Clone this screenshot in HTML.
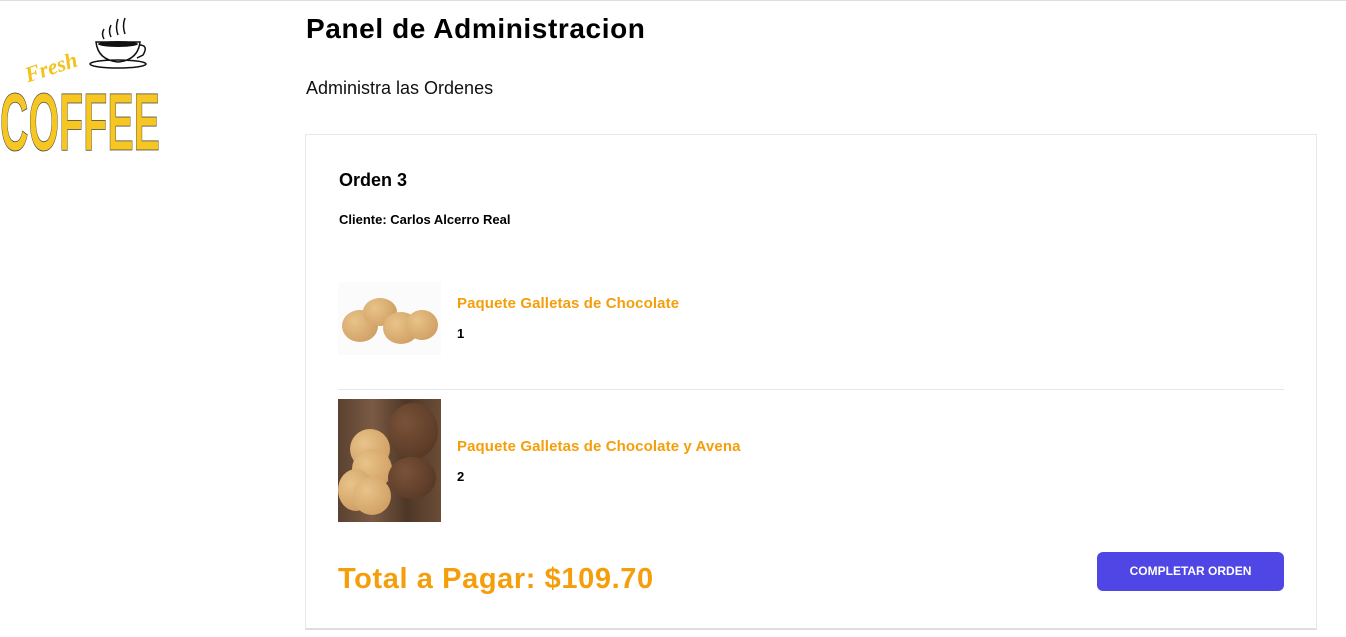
<!DOCTYPE html>
<html><head><meta charset="utf-8"><style>
*{margin:0;padding:0;box-sizing:border-box}
body{width:1346px;height:637px;overflow:hidden;background:#fff;font-family:"Liberation Sans",sans-serif;position:relative}
.a{position:absolute}
h1{position:absolute;left:306px;top:13px;font-size:28px;font-weight:bold;color:#000;letter-spacing:0.6px}
.sub{left:306px;top:78px;font-size:18px;color:#111}
.card{left:305px;top:134px;width:1012px;height:496px;border:1px solid #e5e7eb;border-bottom:2px solid #ddd}
.o{color:#f59e0b;font-weight:bold}
.c{border-radius:50%;background:radial-gradient(circle at 35% 35%,#e8c38a,#c99558);position:absolute}
.d{border-radius:50%;background:radial-gradient(circle at 35% 35%,#7a5238,#4f3221);position:absolute}
</style></head><body>
<div class="a" style="left:0;top:0;width:1346px;height:1px;background:#ddd"></div>
<div class="a" style="left:0;top:15px;width:165px;height:140px">
<svg width="165" height="140" viewBox="0 0 165 140">
<g stroke="#111" stroke-width="1.5" fill="none"><path d="M104 14q-3 5 0 10M111 10q-3 6 0 12M118 4q-3 8 0 16M125 3q-3 8 0 16"/>
<path d="M96 27h44q-2 18-22 20q-20-2-22-20z" fill="#fff"/><path d="M139 30q10 0 4 10l-6 3"/><ellipse cx="118" cy="49" rx="28" ry="4"/></g>
<ellipse cx="118" cy="29" rx="20" ry="3" fill="#111"/>
<text x="25" y="60" font-family="Liberation Serif" font-style="italic" font-weight="bold" font-size="22" fill="#f3c21c" transform="rotate(-18 50 55)">Fresh</text>
<text x="0" y="135" font-family="Liberation Sans" font-weight="bold" font-size="82" fill="#f6c623" stroke="#444" stroke-width="0.8" textLength="160" lengthAdjust="spacingAndGlyphs">COFFEE</text>
</svg></div>
<h1>Panel de Administracion</h1>
<div class="a sub">Administra las Ordenes</div>
<div class="a card"></div>
<div class="a" style="left:339px;top:170px;font-size:18px;font-weight:bold">Orden 3</div>
<div class="a" style="left:339px;top:212px;font-size:13px;font-weight:bold">Cliente: Carlos Alcerro Real</div>
<div class="a" style="left:338px;top:282px;width:103px;height:73px;background:#fbfbfb">
<div class="c" style="left:4px;top:28px;width:36px;height:32px"></div>
<div class="c" style="left:25px;top:16px;width:34px;height:28px"></div>
<div class="c" style="left:45px;top:30px;width:36px;height:32px"></div>
<div class="c" style="left:68px;top:28px;width:32px;height:30px"></div>
</div>
<div class="a o" style="left:457px;top:295px;font-size:15px;letter-spacing:0.1px">Paquete Galletas de Chocolate</div>
<div class="a" style="left:457px;top:326px;font-size:13px;font-weight:bold">1</div>
<div class="a" style="left:338px;top:389px;width:946px;height:1px;background:#e5e7eb"></div>
<div class="a" style="left:338px;top:399px;width:103px;height:123px;background:linear-gradient(90deg,#5a4130,#7a5a44,#4e3727,#6b4d38)">
<div class="c" style="left:12px;top:30px;width:40px;height:40px"></div>
<div class="c" style="left:14px;top:50px;width:40px;height:40px"></div>
<div class="d" style="left:50px;top:4px;width:50px;height:56px"></div>
<div class="d" style="left:50px;top:58px;width:48px;height:42px"></div>
<div class="c" style="left:0;top:70px;width:36px;height:42px"></div>
<div class="c" style="left:15px;top:78px;width:38px;height:38px"></div>
</div>
<div class="a o" style="left:457px;top:438px;font-size:15px;letter-spacing:0.1px">Paquete Galletas de Chocolate y Avena</div>
<div class="a" style="left:457px;top:469px;font-size:13px;font-weight:bold">2</div>
<div class="a o" style="left:338px;top:563px;font-size:29px;letter-spacing:0.6px">Total a Pagar: $109.70</div>
<div class="a" style="left:1097px;top:552px;width:187px;height:39px;background:#4f46e5;border-radius:6px;color:#fff;font-size:12px;font-weight:bold;text-align:center;line-height:39px">COMPLETAR ORDEN</div>
</body></html>
